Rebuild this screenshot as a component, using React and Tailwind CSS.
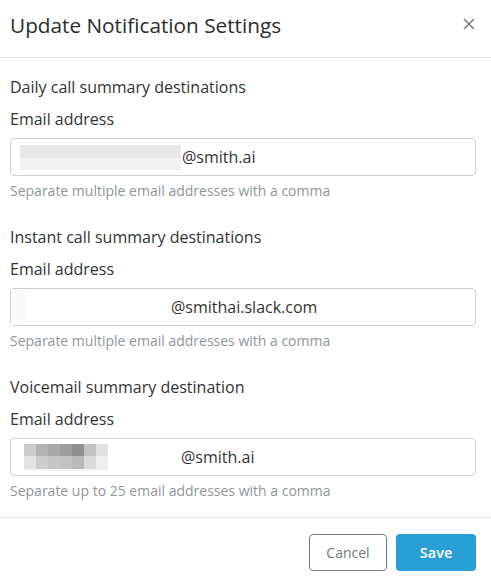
import React from "react";

function Section({ title, children, helper, className = "" }) {
  return (
    <div className={className}>
      <div className="text-[16px] leading-[24px] text-[#333]">{title}</div>
      <div className="mt-[8px] text-[16px] leading-[24px] text-[#333]">Email address</div>
      <div className="mt-[7px] flex h-[38px] items-center rounded-[4px] border border-[#cfcfcf] bg-white text-[16px] text-[#333]">
        {children}
      </div>
      <div className="mt-[6px] text-[14px] leading-[18px] text-[#8f9699]">{helper}</div>
    </div>
  );
}

const pixTop = ["#cbcbcb", "#b3b3b3", "#a9a9a9", "#9d9d9d", "#8f8f8f", "#c2c2c2", "#e2e2e2"];
const pixBot = ["#e3e3e3", "#cdcdcd", "#c6c6c6", "#c2c2c2", "#b9b9b9", "#dadada", "#eeeeee"];

export default function App() {
  return (
    <div
      className="w-[491px] h-[586px] bg-white flex flex-col"
      style={{ fontFamily: '"Open Sans", "Noto Sans", sans-serif' }}
    >
      <div className="flex h-[58px] items-center justify-between border-b border-[#e6e6e6] pl-[10px] pr-[16px]">
        <div className="text-[20.75px] font-medium text-[#2b2b2b] -mt-[6px]">Update Notification Settings</div>
        <svg width="12" height="12" viewBox="0 0 12 12" className="-mt-[9px]">
          <path d="M1.5 1.5 L10.5 10.5 M10.5 1.5 L1.5 10.5" stroke="#7d7d7d" strokeWidth="1.6" strokeLinecap="round" />
        </svg>
      </div>

      <div className="pl-[10px] pr-[15px] pt-[17px] pb-[17px] border-b border-[#e6e6e6]">
        <Section title="Daily call summary destinations" helper="Separate multiple email addresses with a comma">
          <div className="ml-[9px] flex h-[25px] w-[161px] flex-col">
            <div className="h-[13px] bg-[#e8e8e8]" />
            <div className="h-[12px] bg-[#f1f1f1]" />
          </div>
          <span className="ml-[1px]">@smith.ai</span>
        </Section>

        <Section
          className="mt-[25px]"
          title="Instant call summary destinations"
          helper="Separate multiple email addresses with a comma"
        >
          <div className="h-[36px] w-[16px] bg-[#fafafa]" />
          <span className="ml-[144px]">@smithai.slack.com</span>
        </Section>

        <Section
          className="mt-[25px]"
          title="Voicemail summary destination"
          helper="Separate up to 25 email addresses with a comma"
        >
          <div className="ml-[13px] flex flex-col">
            <div className="flex">
              {pixTop.map((c, i) => (
                <div key={i} className="h-[12px] w-[12px]" style={{ background: c }} />
              ))}
            </div>
            <div className="flex">
              {pixBot.map((c, i) => (
                <div key={i} className="h-[13px] w-[12px]" style={{ background: c }} />
              ))}
            </div>
            <div className="flex">
              {pixBot.map((c, i) => (
                <div key={i} className="h-[2px] w-[12px] bg-[#f4f4f4]" />
              ))}
            </div>
          </div>
          <span className="ml-[73px]">@smith.ai</span>
        </Section>
      </div>

      <div className="flex justify-end gap-[9px] pr-[15px] pt-[16px]">
        <button className="h-[37px] w-[78px] rounded-[4px] border border-[#6f7b80] bg-white text-[14px] text-[#6f7b80]">
          Cancel
        </button>
        <button className="h-[37px] w-[80px] rounded-[4px] bg-[#2a9fd6] text-[14.5px] font-semibold text-white">
          Save
        </button>
      </div>
    </div>
  );
}
